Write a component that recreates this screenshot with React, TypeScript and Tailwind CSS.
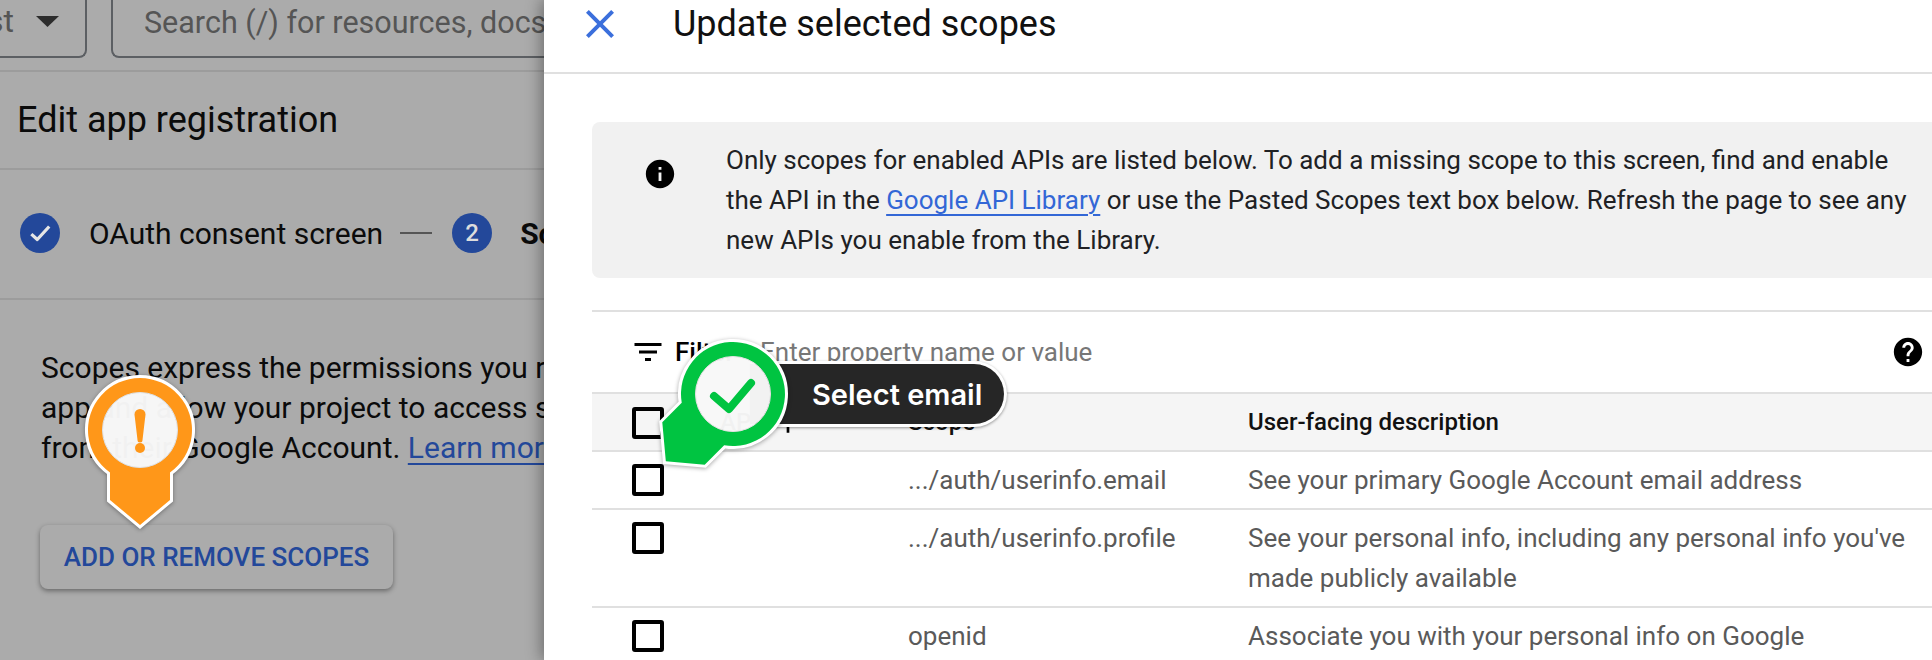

const PIN = "M-30 42.5 A52 52 0 1 1 30 42.5 L30 70 L0 95 L-30 70 Z";
const HOLE = "M-37.5 0 A37.5 37.5 0 1 0 37.5 0 A37.5 37.5 0 1 0 -37.5 0 Z";

function Pin({ color, rotate, children }: { color: string; rotate: number; children: React.ReactNode }) {
  return (
    <svg viewBox="-115 -115 230 230" className="h-[230px] w-[230px] drop-shadow-[0_1px_2px_rgba(0,0,0,0.35)]">
      <path d={PIN} transform={`rotate(${rotate})`} fill="none" stroke="#ffffff" strokeWidth="6" strokeLinejoin="miter" />
      <path d={`${PIN} ${HOLE}`} transform={`rotate(${rotate})`} fill={color} fillRule="evenodd" />
      <circle r="37.5" fill="#fbfbfb" fillOpacity="0.96" stroke="#e2e2e2" strokeWidth="1" />
      {children}
    </svg>
  );
}

function Checkbox() {
  return <div className="h-8 w-8 rounded-[3px] border-4 border-black" />;
}

function Row({ scope, desc, h }: { scope: string; desc: React.ReactNode; h: string }) {
  return (
    <div className={`grid grid-cols-[316px_340px_1fr] border-b-2 border-[#e0e0e0] text-[#5a5a5a] ${h}`}>
      <div className="pl-10 pt-[12px]"><Checkbox /></div>
      <div className="pt-[8px] leading-10">{scope}</div>
      <div className="pt-[8px] leading-10 whitespace-nowrap">{desc}</div>
    </div>
  );
}

function Left() {
  return (
    <div className="h-[660px] w-[544px] shrink-0 overflow-hidden bg-[#ababab] text-[30px] text-[#0b0b0b]">
      <div className="flex h-[72px] border-b-2 border-[#9c9c9c]">
        <div className="flex h-[58px] w-[87px] shrink-0 items-center justify-between rounded-br-lg border-r-2 border-b-2 border-[#5c5f63] pr-[26px] pb-[14px] text-[32px] text-[#555555]">
          <span className="flex w-[14px] justify-end overflow-hidden leading-10">st</span>
          <svg width="23" height="11" viewBox="0 0 23 11" className="shrink-0"><path d="M0 0H23L11.5 11Z" fill="#2d2d2d" /></svg>
        </div>
        <div className="ml-6 h-[58px] flex-1 overflow-hidden rounded-bl-lg border-b-2 border-l-2 border-[#5c5f63] pl-[31px] pt-[3px] text-[30.5px] leading-10 whitespace-nowrap text-[#555555]">
          Search (/) for resources, docs, products and more
        </div>
      </div>
      <div className="flex h-[98px] items-center border-b-2 border-[#9c9c9c] pl-[17px] text-[36px]">Edit app registration</div>
      <div className="flex h-[130px] items-center border-b-2 border-[#9c9c9c] pb-[2px] pl-5 whitespace-nowrap">
        <div className="flex h-10 w-10 shrink-0 items-center justify-center rounded-full bg-[#23489a]">
          <svg width="26" height="26" viewBox="0 0 24 24" fill="none" stroke="#e6e6e6" strokeWidth="3" strokeLinejoin="round"><path d="M4 13l5.5 5L20.5 6" /></svg>
        </div>
        <span className="ml-[29px]">OAuth consent screen</span>
        <div className="ml-[17px] h-[2px] w-8 shrink-0 bg-[#555555]" />
        <div className="ml-5 flex h-10 w-10 shrink-0 items-center justify-center rounded-full bg-[#23489a] text-[24px] font-medium text-[#dddddd]">2</div>
        <span className="ml-7 font-bold">Scopes</span>
      </div>
      <div className="pl-[41px] pt-[48px] leading-10 whitespace-nowrap">
        <div>Scopes express the permissions you request users</div>
        <div>app and allow your project to access specific types</div>
        <div>from their Google Account. <span className="text-[#23489a] underline decoration-2 underline-offset-[5px]">Learn more</span></div>
      </div>
      <button className="mt-[57px] ml-10 flex h-16 w-[353px] items-center justify-center rounded-lg bg-[#ababab] text-[26px] font-medium text-[#23489a] shadow-[0_2px_5px_rgba(0,0,0,0.4)]">
        ADD OR REMOVE SCOPES
      </button>
    </div>
  );
}

function Right() {
  return (
    <div className="relative z-10 h-[660px] flex-1 overflow-hidden bg-white text-[26px] text-[#202124] shadow-[-3px_0_14px_rgba(0,0,0,0.35)]">
      <div className="flex h-[74px] items-center border-b-2 border-[#e0e0e0] pb-[24px] pl-8">
        <svg width="48" height="48" viewBox="0 0 24 24" fill="#3b6fdc" className="shrink-0"><path d="M19 6.41L17.59 5 12 10.59 6.41 5 5 6.41 10.59 12 5 17.59 6.41 19 12 13.41 17.59 19 19 17.59 13.41 12z" /></svg>
        <span className="ml-[49px] text-[36px] text-[#111111]">Update selected scopes</span>
      </div>
      <div className="pl-12 pt-12">
        <div className="flex h-[156px] rounded-l-lg bg-[#f1f1f1] pl-[51px] pt-[18px]">
          <svg width="34" height="34" viewBox="0 0 24 24" className="mt-[17px] shrink-0" fill="#000"><path d="M12 2C6.48 2 2 6.48 2 12s4.48 10 10 10 10-4.48 10-10S17.52 2 12 2zm1 15h-2v-6h2v6zm0-8h-2V7h2v2z" /></svg>
          <div className="ml-[49px] leading-10 whitespace-nowrap text-[#202124]">
            <div>Only scopes for enabled APIs are listed below. To add a missing scope to this screen, find and enable</div>
            <div>the API in the <span className="text-[#3367d6] underline decoration-2 underline-offset-[5px]">Google API Library</span> or use the Pasted Scopes text box below. Refresh the page to see any</div>
            <div>new APIs you enable from the Library.</div>
          </div>
        </div>
        <div className="mt-8 border-t-2 border-[#e0e0e0]">
          <div className="flex h-[82px] items-center border-b-2 border-[#e0e0e0] pl-[38px] pr-[7px]">
            <svg width="36" height="36" viewBox="0 0 24 24" fill="#000" className="shrink-0"><path d="M10 18h4v-2h-4v2zM3 6v2h18V6H3zm3 7h12v-2H6v2z" /></svg>
            <span className="ml-[9px] w-[85px] font-medium text-black">Filter</span>
            <span className="text-[#777777]">Enter property name or value</span>
            <svg width="34" height="34" viewBox="0 0 24 24" className="ml-auto shrink-0" fill="#000"><path d="M12 2C6.48 2 2 6.48 2 12s4.48 10 10 10 10-4.48 10-10S17.52 2 12 2zm1 17h-2v-2h2v2zm2.07-7.75l-.9.92C13.45 12.9 13 13.5 13 15h-2v-.5c0-1.1.45-2.1 1.17-2.83l1.24-1.26c.37-.36.59-.86.59-1.41 0-1.1-.9-2-2-2s-2 .9-2 2H8c0-2.21 1.79-4 4-4s4 1.79 4 4c0 .88-.36 1.68-.93 2.25z" /></svg>
          </div>
          <div className="grid h-[58px] grid-cols-[128px_188px_340px_1fr] items-center border-b-2 border-[#e0e0e0] bg-[#f5f5f5] text-[24px] font-medium text-[#111111]">
            <div className="pl-10 pt-[2px]"><Checkbox /></div>
            <div className="flex items-center"><span>API</span><svg width="32" height="32" viewBox="0 0 24 24" fill="#000" className="ml-[14px] shrink-0"><path d="M4 12l1.41 1.41L11 7.83V20h2V7.83l5.58 5.59L20 12l-8-8-8 8z" /></svg></div>
            <div>Scope</div>
            <div>User-facing description</div>
          </div>
          <Row h="h-[58px]" scope=".../auth/userinfo.email" desc="See your primary Google Account email address" />
          <Row h="h-[98px]" scope=".../auth/userinfo.profile" desc={<>See your personal info, including any personal info you've<br />made publicly available</>} />
          <Row h="h-[58px]" scope="openid" desc="Associate you with your personal info on Google" />
        </div>
      </div>
    </div>
  );
}

export default function App() {
  return (
    <div className="relative flex h-[660px] w-[1932px] overflow-hidden bg-white font-['Roboto',sans-serif]">
      <Left />
      <Right />
      <div className="absolute left-[25px] top-[315px] z-20">
        <Pin color="#ff9719" rotate={0}>
          <path d="M-5.5 -15.5 A5.5 5.5 0 0 1 5.5 -15.5 L2.5 10 A2.5 2.5 0 0 1 -2.5 10 Z" fill="#ff9719" />
          <circle cy="18" r="5" fill="#ff9719" />
        </Pin>
      </div>
      <div className="absolute left-[750px] top-[361px] z-20 flex h-[66px] w-[257px] items-center rounded-r-full border-[3px] border-l-0 border-white bg-[#262626] pl-[62px] pt-[1px] font-['Inter',sans-serif] text-[29px] font-semibold text-white shadow-[0_1px_3px_rgba(0,0,0,0.4)]">
        Select email
      </div>
      <div className="absolute left-[618px] top-[279px] z-20">
        <Pin color="#00c441" rotate={45}>
          <path d="M-19 2 L-4 15 L18 -11" fill="none" stroke="#00c441" strokeWidth="8" strokeLinecap="round" strokeLinejoin="round" />
        </Pin>
      </div>
    </div>
  );
}
